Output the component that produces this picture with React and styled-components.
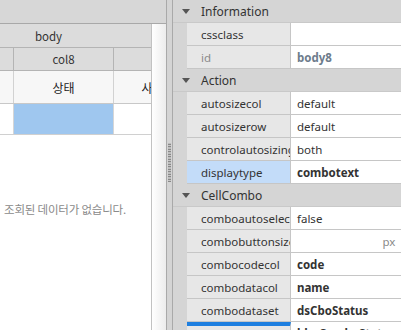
import React from 'react'
import styled, { createGlobalStyle } from 'styled-components'

const GlobalStyle = createGlobalStyle`
   html, body {
      margin: 0;
      padding: 0;
      overflow: hidden;
      background: #ffffff;
   }
   * {
      box-sizing: border-box;
   }
`

const properties = [
   { category: 'Information' },
   { label: 'cssclass', value: '' },
   { label: 'id', value: 'body8', disabled: true },
   { category: 'Action' },
   { label: 'autosizecol', value: 'default' },
   { label: 'autosizerow', value: 'default' },
   { label: 'controlautosizing', value: 'both' },
   { label: 'displaytype', value: 'combotext', bold: true, selected: true },
   { category: 'CellCombo' },
   { label: 'comboautoselect', value: 'false' },
   { label: 'combobuttonsize', value: '', unit: 'px' },
   { label: 'combocodecol', value: 'code', bold: true },
   { label: 'combodatacol', value: 'name', bold: true },
   { label: 'combodataset', value: 'dsCboStatus', bold: true },
   { label: 'combodisplay', value: 'bkgComboStatus', bold: true, focused: true },
]

const App = () => {
   return (
      <Page>
         <GlobalStyle />
         <LeftPanel>
            <TopBand />
            <GridArea>
               <GridBody>
                  <Sheet>
                     <BandRow>
                        <BandCell>body</BandCell>
                     </BandRow>
                     <HeadRow>
                        <HeadCell />
                        <HeadCell>col8</HeadCell>
                        <HeadCell />
                     </HeadRow>
                     <TitleRow>
                        <TitleCell />
                        <TitleCell>상태</TitleCell>
                        <TitleCell>사용여부</TitleCell>
                     </TitleRow>
                     <DataRow>
                        <DataCell />
                        <DataCell selected />
                        <DataCell />
                     </DataRow>
                     <EmptyText>조회된 데이터가 없습니다.</EmptyText>
                  </Sheet>
               </GridBody>
               <VScroll />
            </GridArea>
         </LeftPanel>
         <Splitter>
            <Grip />
         </Splitter>
         <PropertyPanel>
            {properties.map((p, i) =>
               p.category ? (
                  <CategoryRow key={i}>
                     <Arrow>
                        <svg width="8" height="5" viewBox="0 0 8 5">
                           <path d="M0 0 H8 L4 5 Z" fill="#555" />
                        </svg>
                     </Arrow>
                     <CategoryName>{p.category}</CategoryName>
                  </CategoryRow>
               ) : (
                  <PropRow key={i}>
                     <Gutter />
                     <PropLabel
                        $selected={p.selected}
                        $disabled={p.disabled}
                        $focused={p.focused}
                     >
                        {p.label}
                     </PropLabel>
                     <PropValue $bold={p.bold} $disabled={p.disabled}>
                        <span>{p.value}</span>
                        {p.unit && <Unit>{p.unit}</Unit>}
                     </PropValue>
                  </PropRow>
               )
            )}
         </PropertyPanel>
      </Page>
   )
}

export default App

const Page = styled('div')({
   display: 'flex',
   width: '401px',
   height: '330px',
   overflow: 'hidden',
   fontFamily: '"Noto Sans", "Noto Sans CJK KR", sans-serif',
   fontSize: '12px',
   color: '#333333',
})

const LeftPanel = styled('div')({
   width: '167px',
   flexShrink: 0,
   display: 'flex',
   flexDirection: 'column',
   borderRight: '1px solid #a9a9a9',
   background: '#ffffff',
})

const TopBand = styled('div')({
   height: '24px',
   flexShrink: 0,
   background: '#d7d7d7',
   borderBottom: '1px solid #a8a8a8',
})

const GridArea = styled('div')({
   flex: 1,
   display: 'flex',
   minHeight: 0,
})

const GridBody = styled('div')({
   width: '151px',
   flexShrink: 0,
   overflow: 'hidden',
})

const Sheet = styled('div')({
   width: '300px',
   marginLeft: '-86px',
   display: 'flex',
   flexDirection: 'column',
   fontFamily: '"Noto Sans CJK KR", "Noto Sans", sans-serif',
   fontSize: '11.5px',
})

const BandRow = styled('div')({
   display: 'flex',
   height: '24px',
   background: '#dcdcdc',
   borderBottom: '1px solid #b4b4b4',
})

const BandCell = styled('div')({
   width: '270px',
   display: 'flex',
   alignItems: 'center',
   justifyContent: 'center',
   borderRight: '1px solid #b4b4b4',
})

const HeadRow = styled('div')({
   display: 'flex',
   height: '23px',
   background: '#dcdcdc',
   borderBottom: '1px solid #b4b4b4',
})

const HeadCell = styled('div')({
   width: '100px',
   display: 'flex',
   alignItems: 'center',
   justifyContent: 'center',
   borderRight: '1px solid #b4b4b4',
})

const TitleRow = styled('div')({
   display: 'flex',
   height: '33px',
   background: '#f7f7f7',
   borderBottom: '1px solid #c8c8c8',
})

const TitleCell = styled('div')({
   width: '100px',
   display: 'flex',
   alignItems: 'center',
   justifyContent: 'center',
   borderRight: '1px solid #d2d2d2',
   fontSize: '12px',
   color: '#222222',
})

const DataRow = styled('div')({
   display: 'flex',
   height: '31px',
   borderBottom: '1px solid #d0d0d0',
})

const DataCell = styled('div')((props) => ({
   width: '100px',
   background: props.selected ? '#9fc7ef' : '#ffffff',
   borderRight: '1px solid #d6d6d6',
}))

const EmptyText = styled('div')({
   marginTop: '66px',
   textAlign: 'center',
   paddingLeft: '2px',
   color: '#8a8a8a',
   fontSize: '11.5px',
   letterSpacing: '-0.2px',
   whiteSpace: 'nowrap',
})

const VScroll = styled('div')({
   flex: 1,
   borderLeft: '1px solid #c2c2c2',
   background: 'linear-gradient(to right, #ffffff, #ececec)',
})

const Splitter = styled('div')({
   width: '6px',
   flexShrink: 0,
   background: '#d4d4d4',
   borderRight: '1px solid #a9a9a9',
   display: 'flex',
   flexDirection: 'column',
   alignItems: 'center',
   paddingTop: '143px',
})

const Grip = styled('div')({
   width: '3px',
   height: '39px',
   backgroundImage: 'radial-gradient(circle, #6f6f6f 0.8px, transparent 1px)',
   backgroundSize: '2px 2.5px',
})

const PropertyPanel = styled('div')({
   flex: 1,
   display: 'flex',
   flexDirection: 'column',
   background: '#d5d5d5',
   fontSize: '11.5px',
})

const CategoryRow = styled('div')({
   height: '23px',
   flexShrink: 0,
   display: 'flex',
   alignItems: 'center',
   background: '#d5d5d5',
   borderBottom: '1px solid #c9c9c9',
})

const Arrow = styled('div')({
   width: '28px',
   display: 'flex',
   justifyContent: 'center',
   paddingRight: '2px',
   paddingTop: '1px',
})

const CategoryName = styled('div')({
   fontSize: '12px',
   color: '#333333',
})

const PropRow = styled('div')({
   height: '23px',
   flexShrink: 0,
   display: 'flex',
})

const Gutter = styled('div')({
   width: '14px',
   background: '#d5d5d5',
})

const PropLabel = styled('div')((props) => ({
   width: '104px',
   display: 'flex',
   alignItems: 'center',
   paddingLeft: '14px',
   overflow: 'hidden',
   whiteSpace: 'nowrap',
   background: props.$selected ? '#c3dcf9' : '#e7e7e7',
   color: props.$disabled ? '#8a8a8a' : '#333333',
   borderBottom: '1px solid #c6c6c6',
   borderRight: '1px solid #c6c6c6',
   borderTop: props.$focused ? '4px solid #1e7fe0' : 'none',
}))

const PropValue = styled('div')((props) => ({
   flex: 1,
   display: 'flex',
   alignItems: 'center',
   justifyContent: 'space-between',
   paddingLeft: '6px',
   paddingRight: '9px',
   background: '#ffffff',
   fontWeight: props.$bold || props.$disabled ? 700 : 400,
   color: props.$disabled ? '#6d7c8c' : '#333333',
   borderBottom: '1px solid #c6c6c6',
   whiteSpace: 'nowrap',
   overflow: 'hidden',
}))

const Unit = styled('span')({
   color: '#8a8a8a',
   fontWeight: 400,
})
